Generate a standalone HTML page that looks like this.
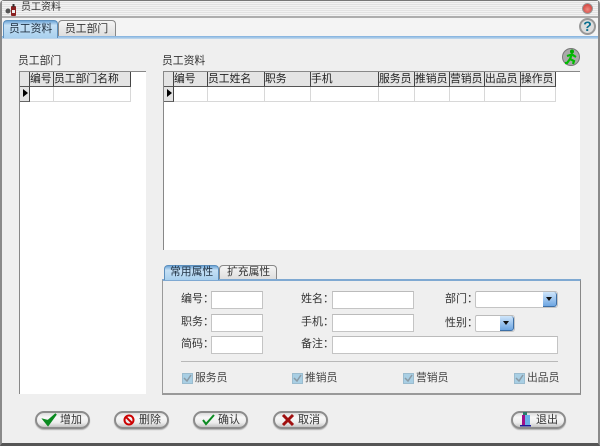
<!DOCTYPE html>
<html><head><meta charset="utf-8">
<style>
html,body{margin:0;padding:0}
body{width:600px;height:446px;overflow:hidden;position:relative;background:#efefef;font-family:"Liberation Sans","Noto Sans CJK SC",sans-serif;font-size:11px;color:#333}
div,span{position:absolute;box-sizing:border-box;white-space:nowrap}
svg{position:absolute;overflow:visible}
.t{line-height:14px;height:14px}
.grid{background:#fff}
.h{top:0;height:15px;background:#e4e4e4;border-right:1px solid #444;border-bottom:1px solid #555;line-height:14px;padding-left:0;font-size:10.8px;color:#222;overflow:hidden}
.c{height:15px;background:#fff;border-right:1px solid #d8d8d8;border-bottom:1px solid #d8d8d8}
.in{background:#fff;border:1px solid #c4c4c4;border-top-color:#bbb;height:18px}
.btn{top:411px;height:18px;width:55px;border-radius:9px;border:2px solid #8c8c8c;background:linear-gradient(#dcdcdc,#f8f8f8 30%,#ececec 70%,#c4c4c4);box-shadow:0 1px 1px #b0b0b0}
.btn span{top:0;left:23px;line-height:14px;font-size:11px;color:#333}
.cb{width:11px;height:11px;background:#a9cfe4;border:1px solid #9bbccf}
.cbl{line-height:14px;height:14px;font-size:10.8px;color:#444}
.dd{top:0;right:0;width:14px;background:linear-gradient(#cfe6fb,#6da6e2);border-radius:0 3px 3px 0;border-right:1px solid #3d6fa5;border-bottom:1px solid #3d6fa5}
.dd i{position:absolute;left:3px;top:5px;width:0;height:0;border-left:3px solid transparent;border-right:3px solid transparent;border-top:4px solid #111}
</style></head><body>

<!-- window frame -->
<div style="left:0;top:0;width:600px;height:446px;border:2px solid #8a8a8a;border-top:1px solid #777;border-bottom:3px solid #555;border-radius:4px 4px 0 0"></div>
<!-- title -->
<div style="left:2px;top:1px;width:596px;height:15px;background:repeating-linear-gradient(#f2f2f2 0,#f2f2f2 1px,#e2e2e2 1px,#e2e2e2 2px)"></div>
<div style="left:2px;top:16px;width:596px;height:2px;background:#adadad"></div>
<svg style="left:5px;top:4px" width="12" height="12" viewBox="0 0 12 12"><rect x="6" y="2" width="5" height="10" rx="1" fill="#8a2020"/><rect x="7.5" y="0" width="2" height="3" fill="#333"/><circle cx="3" cy="7" r="2.5" fill="#555"/><rect x="7" y="6" width="3" height="3" fill="#eee"/></svg>
<div class="t" style="left:21px;top:1px;font-size:10px;color:#333">员工资料</div>
<div style="left:582px;top:3px;width:11px;height:11px;border-radius:50%;background:radial-gradient(circle at 50% 60%,#f08a80,#c9302c);border:1px solid #999"></div>

<!-- tab strip -->
<div style="left:2px;top:18px;width:596px;height:19px;background:#f4f4f4"></div>
<div style="left:2px;top:36px;width:596px;height:3px;background:linear-gradient(#7fb0de,#c6dbee)"></div>
<div style="left:3px;top:20px;width:55px;height:18px;border-radius:4px 4px 0 0;background:linear-gradient(#6fa6d8,#c5e0f5 25%,#a8d0ee);border:1px solid #5c8fbd;border-bottom:none"></div>
<div class="t" style="left:9px;top:22px;font-size:10.8px;color:#234">员工资料</div>
<div style="left:58px;top:20px;width:58px;height:16px;border-radius:4px 4px 0 0;background:linear-gradient(#f5f5f5,#dedede);border:1px solid #888;border-bottom:none"></div>
<div class="t" style="left:65px;top:22px;font-size:10.8px;color:#333">员工部门</div>

<!-- help -->
<div style="left:579px;top:18px;width:17px;height:17px;border-radius:50%;background:#ddd;border:2px solid #999;font:bold 14px/13px 'Liberation Sans',sans-serif;color:#0a6f8f;text-align:center">?</div>
<!-- run icon -->
<div style="left:562px;top:48px;width:18px;height:18px;border-radius:50%;background:#aaa;border:1px solid #777"></div>
<svg style="left:564px;top:49px" width="14" height="16" viewBox="0 0 14 16"><circle cx="8" cy="2.5" r="2" fill="#0a0"/><path d="M8 5L6 10M3 7L8 5.5L12 8M6 10L10 12L9 15M6 10L3 14H1" stroke="#0b0" stroke-width="2.2" fill="none"/></svg>

<!-- left grid -->
<div class="t" style="left:18px;top:54px;font-size:10.8px">员工部门</div>
<div class="grid" style="left:19px;top:71px;width:127px;height:323px;border-left:1px solid #888;border-top:1px solid #888">
 <div class="h" style="left:0;width:10px"></div>
 <div class="h" style="left:10px;width:24px">编号</div>
 <div class="h" style="left:34px;width:77px">员工部门名称</div>
 <div class="c" style="left:0;top:15px;width:10px;background:#e4e4e4;border-right-color:#444;border-bottom-color:#666"></div>
 <div style="left:3px;top:17px;width:0;height:0;border-top:4.5px solid transparent;border-bottom:4.5px solid transparent;border-left:5px solid #000"></div>
 <div class="c" style="left:10px;top:15px;width:24px"></div>
 <div class="c" style="left:34px;top:15px;width:77px"></div>
</div>

<!-- right grid -->
<div class="t" style="left:162px;top:54px;font-size:10.8px">员工资料</div>
<div class="grid" style="left:163px;top:71px;width:417px;height:179px;border-left:1px solid #888;border-top:1px solid #888">
 <div class="h" style="left:0;width:10px"></div>
 <div class="h" style="left:10px;width:34px">编号</div>
 <div class="h" style="left:44px;width:57px">员工姓名</div>
 <div class="h" style="left:101px;width:46px">职务</div>
 <div class="h" style="left:147px;width:68px">手机</div>
 <div class="h" style="left:215px;width:36px">服务员</div>
 <div class="h" style="left:251px;width:35px">推销员</div>
 <div class="h" style="left:286px;width:35px">营销员</div>
 <div class="h" style="left:321px;width:36px">出品员</div>
 <div class="h" style="left:357px;width:35px">操作员</div>
 <div class="c" style="left:0;top:15px;width:10px;background:#e4e4e4;border-right-color:#444;border-bottom-color:#666"></div>
 <div style="left:3px;top:17px;width:0;height:0;border-top:4.5px solid transparent;border-bottom:4.5px solid transparent;border-left:5px solid #000"></div>
 <div class="c" style="left:10px;top:15px;width:34px"></div>
 <div class="c" style="left:44px;top:15px;width:57px"></div>
 <div class="c" style="left:101px;top:15px;width:46px"></div>
 <div class="c" style="left:147px;top:15px;width:68px"></div>
 <div class="c" style="left:215px;top:15px;width:36px"></div>
 <div class="c" style="left:251px;top:15px;width:35px"></div>
 <div class="c" style="left:286px;top:15px;width:35px"></div>
 <div class="c" style="left:321px;top:15px;width:36px"></div>
 <div class="c" style="left:357px;top:15px;width:35px"></div>
</div>

<!-- panel -->
<div style="left:162px;top:279px;width:419px;height:116px;border:1px solid #9a9a9a;border-top:2px solid #7fa9d2;border-right-color:#888;border-bottom:2px solid #999"></div>
<div style="left:164px;top:265px;width:55px;height:15px;border-radius:4px 4px 0 0;background:linear-gradient(#6fa6d8,#c5e0f5 30%,#a8d0ee);border:1px solid #5c8fbd;border-bottom:none"></div>
<div class="t" style="left:170px;top:265px;font-size:10.8px;color:#234">常用属性</div>
<div style="left:219px;top:265px;width:58px;height:14px;border-radius:4px 4px 0 0;background:linear-gradient(#f5f5f5,#dedede);border:1px solid #888;border-bottom:none"></div>
<div class="t" style="left:227px;top:265px;font-size:10.8px;color:#333">扩充属性</div>

<div class="t" style="left:181px;top:292px">编号：</div>
<div class="t" style="left:181px;top:315px">职务：</div>
<div class="t" style="left:181px;top:337px">简码：</div>
<div class="in" style="left:211px;top:291px;width:52px"></div>
<div class="in" style="left:211px;top:314px;width:52px"></div>
<div class="in" style="left:211px;top:336px;width:52px"></div>

<div class="t" style="left:301px;top:292px">姓名：</div>
<div class="t" style="left:301px;top:315px">手机：</div>
<div class="t" style="left:301px;top:337px">备注：</div>
<div class="in" style="left:332px;top:291px;width:82px"></div>
<div class="in" style="left:332px;top:314px;width:82px"></div>
<div class="in" style="left:332px;top:336px;width:226px"></div>

<div class="t" style="left:445px;top:292px">部门：</div>
<div class="t" style="left:445px;top:316px">性别：</div>
<div class="in" style="left:475px;top:291px;width:83px;height:17px;border-radius:2px 3px 3px 2px"><div class="dd" style="height:15px"><i></i></div></div>
<div class="in" style="left:475px;top:315px;width:40px;height:17px;border-radius:2px 3px 3px 2px"><div class="dd" style="height:15px"><i></i></div></div>

<div style="left:181px;top:361px;width:377px;height:1px;background:#b8b8b8"></div>

<div class="cb" style="left:182px;top:373px"></div><div class="cbl" style="left:195px;top:371px">服务员</div>
<div class="cb" style="left:292px;top:373px"></div><div class="cbl" style="left:305px;top:371px">推销员</div>
<div class="cb" style="left:403px;top:373px"></div><div class="cbl" style="left:416px;top:371px">营销员</div>
<div class="cb" style="left:514px;top:373px"></div><div class="cbl" style="left:527px;top:371px">出品员</div>
<svg style="left:183px;top:374px" width="9" height="9" viewBox="0 0 9 9"><path d="M1 4L4 7L8 1" stroke="#8a9aa5" stroke-width="1.5" fill="none"/></svg>
<svg style="left:293px;top:374px" width="9" height="9" viewBox="0 0 9 9"><path d="M1 4L4 7L8 1" stroke="#8a9aa5" stroke-width="1.5" fill="none"/></svg>
<svg style="left:404px;top:374px" width="9" height="9" viewBox="0 0 9 9"><path d="M1 4L4 7L8 1" stroke="#8a9aa5" stroke-width="1.5" fill="none"/></svg>
<svg style="left:515px;top:374px" width="9" height="9" viewBox="0 0 9 9"><path d="M1 4L4 7L8 1" stroke="#8a9aa5" stroke-width="1.5" fill="none"/></svg>

<!-- buttons -->
<div class="btn" style="left:35px"><span>增加</span></div>
<svg style="left:43px;top:412px" width="14" height="15" viewBox="0 0 14 15"><path d="M1 8L5 13L13 2L5 9Z" stroke="#0a8a20" stroke-width="2" fill="#0a8a20"/></svg>
<div class="btn" style="left:114px"><span>删除</span></div>
<svg style="left:123px;top:414px" width="12" height="12" viewBox="0 0 12 12"><circle cx="6" cy="6" r="4.5" fill="none" stroke="#c00" stroke-width="2"/><path d="M3 3L9 9" stroke="#c00" stroke-width="2"/></svg>
<div class="btn" style="left:193px"><span>确认</span></div>
<svg style="left:202px;top:413px" width="13" height="13" viewBox="0 0 13 13"><path d="M1 7L4 11L12 2" stroke="#0a8a20" stroke-width="2" fill="none"/></svg>
<div class="btn" style="left:273px"><span>取消</span></div>
<svg style="left:282px;top:414px" width="12" height="12" viewBox="0 0 12 12"><path d="M1 1L11 11M11 1L1 11" stroke="#a01010" stroke-width="3"/></svg>
<div class="btn" style="left:511px"><span>退出</span></div>
<svg style="left:520px;top:412px" width="12" height="15" viewBox="0 0 12 15"><rect x="3" y="0" width="4" height="3" fill="#2a7a6a"/><rect x="2" y="3" width="3" height="10" fill="#a0108a"/><rect x="5" y="3" width="5" height="10" fill="#6ab0e8"/><rect x="0" y="13" width="11" height="1.5" fill="#1a1a9a"/></svg>

</body></html>
